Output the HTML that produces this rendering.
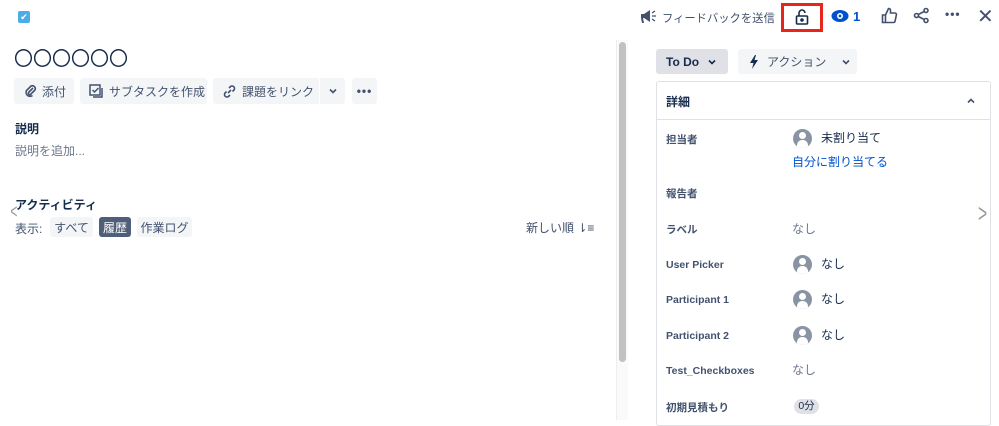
<!DOCTYPE html>
<html><head><meta charset="utf-8"><style>
*{box-sizing:border-box;margin:0;padding:0}
body{width:999px;height:420px;overflow:hidden;background:#fff;font-family:"Liberation Sans","Noto Sans CJK JP",sans-serif;color:#172b4d;position:relative}
.a{position:absolute;white-space:nowrap}
.btn{position:absolute;background:#f4f5f7;border-radius:3px;height:26px;font-size:12px;color:#42526e;display:flex;align-items:center;white-space:nowrap;overflow:hidden}
.lbl{position:absolute;left:666px;font-size:10.5px;font-weight:bold;color:#42526e}
.val{position:absolute;left:792px;font-size:12px;color:#172b4d}
.av{position:absolute;left:793px;width:19px;height:19px;border-radius:50%;background:#8993a4;overflow:hidden}
.av:before{content:"";position:absolute;left:6px;top:3px;width:7px;height:7px;border-radius:50%;background:#fff}
.av:after{content:"";position:absolute;left:4px;top:11px;width:11px;height:10px;border-radius:5px 5px 0 0;background:#fff}
</style></head><body>
<div class="a" style="left:18px;top:11px;width:12px;height:12px;background:#4bade8;border-radius:2px;color:#fff;font-size:9px;text-align:center;line-height:12px">✔</div>
<div class="a" style="left:14px;top:44px;font-size:19px">〇〇〇〇〇〇</div>
<div class="btn" style="left:14px;top:78px;width:60px;padding-left:10px"><svg width="14" height="14" viewBox="0 0 14 14" fill="none" stroke="#42526e" stroke-width="1.6"><path d="M9 4L4.5 8.5a1.5 1.5 0 002 2L11 6a3 3 0 00-4-4L2.5 6.5a4 4 0 006 5"/></svg><span style="margin-left:4px">添付</span></div>
<div class="btn" style="left:80px;top:78px;width:127px;padding-left:9px"><svg width="15" height="15" viewBox="0 0 15 15" fill="none" stroke="#42526e" stroke-width="1.5"><rect x="1" y="1" width="10" height="10"/><path d="M3.5 6l2 2 4-4M13 4v9H4"/></svg><span style="margin-left:5px">サブタスクを作成</span></div>
<div class="btn" style="left:213px;top:78px;width:106px;padding-left:9px;border-radius:3px 0 0 3px"><svg width="15" height="15" viewBox="0 0 15 15" fill="none" stroke="#42526e" stroke-width="1.6"><path d="M6 9l3-3M7 4l1.5-1.5a2.5 2.5 0 013.5 3.5L10.5 7.5M8 11l-1.5 1.5a2.5 2.5 0 01-3.5-3.5L4.5 7.5"/></svg><span style="margin-left:5px">課題をリンク</span></div>
<div class="btn" style="left:320px;top:78px;width:25px;border-radius:0 3px 3px 0;justify-content:center"><svg width="8" height="6" viewBox="0 0 8 6"><path d="M1 1.5l3 3 3-3" fill="none" stroke="#42526e" stroke-width="1.6"/></svg></div>
<div class="btn" style="left:352px;top:78px;width:25px;justify-content:center;font-weight:bold;letter-spacing:1px">•••</div>
<div class="a" style="left:15px;top:120px;font-size:12px;font-weight:bold">説明</div>
<div class="a" style="left:15px;top:142px;font-size:12px;color:#6b778c">説明を追加...</div>
<div class="a" style="left:15px;top:196px;font-size:12px;font-weight:bold">アクティビティ</div>
<div class="a" style="left:8px;top:201px;font-size:20px;color:#999;transform:scaleX(.6)">&lt;</div>
<div class="a" style="left:15px;top:220px;font-size:12px;color:#42526e">表示:</div>
<div class="btn" style="left:50px;top:217px;height:20px;width:43px;justify-content:center">すべて</div>
<div class="btn" style="left:99px;top:217px;height:20px;width:32px;justify-content:center;background:#505f79;color:#fff">履歴</div>
<div class="btn" style="left:137px;top:217px;height:20px;width:55px;justify-content:center">作業ログ</div>
<div class="a" style="left:526px;top:219px;font-size:12px;color:#42526e">新しい順 ⇂≡</div>
<div class="a" style="left:616px;top:40px;width:12px;height:380px;background:#fafafa;border-left:1px solid #eee"></div>
<div class="a" style="left:619px;top:42px;width:7px;height:320px;background:#c1c1c1;border-radius:4px"></div>
<svg class="a" style="left:640px;top:9px" width="17" height="15" viewBox="0 0 17 15"><path d="M1 5h3l6-4v12L4 9H3l1 5H2L1 9z" fill="#42526e"/><path d="M12 4l3-2M12 7h4M12 10l3 2" stroke="#42526e" stroke-width="1.3"/></svg>
<div class="a" style="left:662px;top:10px;font-size:11.3px;color:#42526e">フィードバックを送信</div>
<div class="a" style="left:781px;top:3px;width:42px;height:29px;border:3px solid #e8251a"></div>
<svg class="a" style="left:794px;top:8px" width="16" height="18" viewBox="0 0 16 18" fill="none" stroke="#172b4d" stroke-width="1.6"><path d="M5 8V5a3 3 0 016 0"/><rect x="2.5" y="8" width="11" height="8" rx="1"/><circle cx="8" cy="12" r="1" fill="#172b4d"/></svg>
<svg class="a" style="left:831px;top:9px" width="18" height="14" viewBox="0 0 18 14"><ellipse cx="9" cy="7" rx="8.5" ry="6" fill="#0052cc"/><circle cx="9" cy="7" r="3" fill="#fff"/><circle cx="9" cy="7" r="1.4" fill="#0052cc"/></svg>
<div class="a" style="left:853px;top:9px;font-size:13px;color:#0052cc;font-weight:bold">1</div>
<svg class="a" style="left:881px;top:7px" width="17" height="17" viewBox="0 0 17 17" fill="none" stroke="#42526e" stroke-width="1.6"><path d="M1.5 8h3v7.5h-3zM4.5 8l3-6.5c1.5 0 2 1 2 2V6h4.5a1.5 1.5 0 011.4 1.8l-1.3 6.2a1.5 1.5 0 01-1.5 1.5H4.5"/></svg>
<svg class="a" style="left:913px;top:7px" width="17" height="17" viewBox="0 0 17 17" fill="none" stroke="#42526e" stroke-width="1.6"><circle cx="13" cy="3.5" r="2"/><circle cx="3.5" cy="8.5" r="2"/><circle cx="13" cy="13.5" r="2"/><path d="M5.3 7.5l5.9-3M5.3 9.5l5.9 3"/></svg>
<div class="a" style="left:945px;top:7px;font-size:12px;font-weight:bold;color:#42526e;letter-spacing:1px">•••</div>
<div class="a" style="left:977px;top:4px;font-size:20px;color:#42526e">✕</div>
<div class="btn" style="left:656px;top:49px;width:72px;height:25px;background:#dfe1e6;color:#172b4d;font-weight:bold;padding-left:10px">To Do<svg style="margin-left:9px" width="8" height="6" viewBox="0 0 8 6"><path d="M1 1.5l3 3 3-3" fill="none" stroke="#172b4d" stroke-width="1.6"/></svg></div>
<div class="btn" style="left:738px;top:49px;width:119px;height:25px;padding-left:11px"><svg width="10" height="14" viewBox="0 0 10 14"><path d="M6 0L1 8h3.5L3 14l6-9H5.5L7 0z" fill="#172b4d"/></svg><span style="margin-left:8px">アクション</span><svg style="margin-left:16px" width="8" height="6" viewBox="0 0 8 6"><path d="M1 1.5l3 3 3-3" fill="none" stroke="#42526e" stroke-width="1.6"/></svg></div>
<div class="a" style="left:656px;top:81px;width:335px;height:345px;border:1px solid #dfe1e6;border-radius:3px"></div>
<div class="a" style="left:656px;top:119px;width:335px;height:1px;background:#dfe1e6"></div>
<div class="a" style="left:666px;top:93px;font-size:12px;font-weight:bold">詳細</div>
<svg class="a" style="left:967px;top:98px" width="8" height="6" viewBox="0 0 8 6"><path d="M1 4.5l3-3 3 3" fill="none" stroke="#42526e" stroke-width="1.6"/></svg>
<div class="lbl" style="top:132px">担当者</div>
<div class="av" style="top:129px"></div>
<div class="val" style="left:821px;top:129px">未割り当て</div>
<div class="val" style="top:153px;color:#0052cc">自分に割り当てる</div>
<div class="lbl" style="top:186px">報告者</div>
<div class="a" style="left:975px;top:198px;font-size:26px;color:#999;transform:scaleX(.6)">&gt;</div>
<div class="lbl" style="top:222px">ラベル</div>
<div class="val" style="top:220px;color:#6b778c">なし</div>
<div class="lbl" style="top:259px">User Picker</div>
<div class="av" style="top:255px"></div><div class="val" style="left:821px;top:255px">なし</div>
<div class="lbl" style="top:294px">Participant 1</div>
<div class="av" style="top:290px"></div><div class="val" style="left:821px;top:290px">なし</div>
<div class="lbl" style="top:330px">Participant 2</div>
<div class="av" style="top:326px"></div><div class="val" style="left:821px;top:326px">なし</div>
<div class="lbl" style="top:365px">Test_Checkboxes</div>
<div class="val" style="top:361px;color:#6b778c">なし</div>
<div class="lbl" style="top:400px">初期見積もり</div>
<div class="a" style="left:794px;top:399px;width:25px;height:15px;border-radius:8px;background:#dfe1e6;font-size:10.5px;text-align:center;line-height:15px;color:#172b4d">0分</div>
</body></html>
